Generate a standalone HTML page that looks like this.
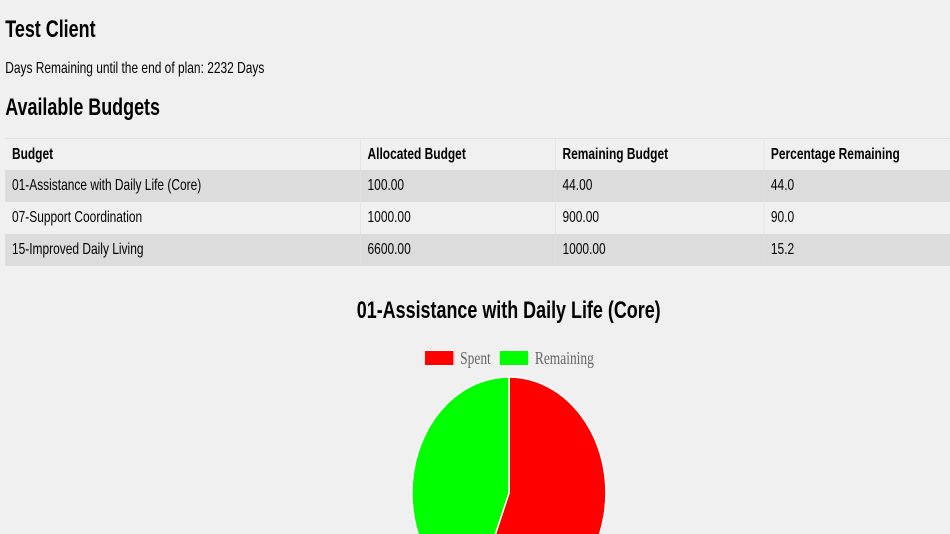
<!DOCTYPE html>
<html><head><meta charset="utf-8"><style>
html,body{margin:0;padding:0;background:#f0f0f0;width:950px;height:534px;overflow:hidden}
#w{position:absolute;left:0;top:0;width:1272px;height:534px;transform:scaleX(0.747);transform-origin:0 0;font-family:"Liberation Sans",sans-serif;color:#000}
.a{position:absolute;white-space:nowrap}
.row{position:absolute;left:7px;width:1280px;height:32px}
.c{position:absolute;top:0;height:32px;line-height:32px;font-size:16px;padding-left:9px;box-sizing:border-box;border-right:1px solid #e2e2e2}
</style></head><body>
<div id="w">
<div class="a" style="left:7px;top:16px;font-size:24px;font-weight:bold">Test Client</div>
<div class="a" style="left:7px;top:60px;font-size:16px">Days Remaining until the end of plan: 2232 Days</div>
<div class="a" style="left:7px;top:94px;font-size:24px;font-weight:bold">Available Budgets</div>

<div class="row" style="top:138px;background:#f0f0f0;border-top:1px solid #e2e2e2;height:31px">
<div class="c" style="left:0;width:476px;font-weight:bold">Budget</div>
<div class="c" style="left:476px;width:261px;font-weight:bold">Allocated Budget</div>
<div class="c" style="left:737px;width:279px;font-weight:bold">Remaining Budget</div>
<div class="c" style="left:1016px;width:264px;font-weight:bold">Percentage Remaining</div>
</div>
<div class="row" style="top:170px;background:#dcdcdc">
<div class="c" style="left:0;width:476px">01-Assistance with Daily Life (Core)</div>
<div class="c" style="left:476px;width:261px">100.00</div>
<div class="c" style="left:737px;width:279px">44.00</div>
<div class="c" style="left:1016px;width:264px">44.0</div>
</div>
<div class="row" style="top:202px;background:#f0f0f0">
<div class="c" style="left:0;width:476px">07-Support Coordination</div>
<div class="c" style="left:476px;width:261px">1000.00</div>
<div class="c" style="left:737px;width:279px">900.00</div>
<div class="c" style="left:1016px;width:264px">90.0</div>
</div>
<div class="row" style="top:234px;background:#dcdcdc">
<div class="c" style="left:0;width:476px">15-Improved Daily Living</div>
<div class="c" style="left:476px;width:261px">6600.00</div>
<div class="c" style="left:737px;width:279px">1000.00</div>
<div class="c" style="left:1016px;width:264px">15.2</div>
</div>

<div class="a" style="left:431px;width:500px;text-align:center;top:297px;font-size:24px;font-weight:bold">01-Assistance with Daily Life (Core)</div>
<div class="a" style="left:568px;top:350px;width:38px;height:14px;background:#f00;border:1px solid #fff"></div>
<div class="a" style="left:616px;top:348px;font-family:'Liberation Serif',serif;font-size:18px;color:#666">Spent</div>
<div class="a" style="left:668px;top:350px;width:38px;height:14px;background:#0f0;border:1px solid #fff"></div>
<div class="a" style="left:716px;top:348px;font-family:'Liberation Serif',serif;font-size:18px;color:#666">Remaining</div>
</div>
<svg style="position:absolute;left:0;top:0" width="950" height="534">
<path d="M509,493 L509,377 A97,116 0 1 1 473.3,600.9 Z" fill="#f00" stroke="#fff" stroke-width="1.5"/>
<path d="M509,493 L473.3,600.9 A97,116 0 0 1 509,377 Z" fill="#0f0" stroke="#fff" stroke-width="1.5"/>
</svg>
</body></html>
